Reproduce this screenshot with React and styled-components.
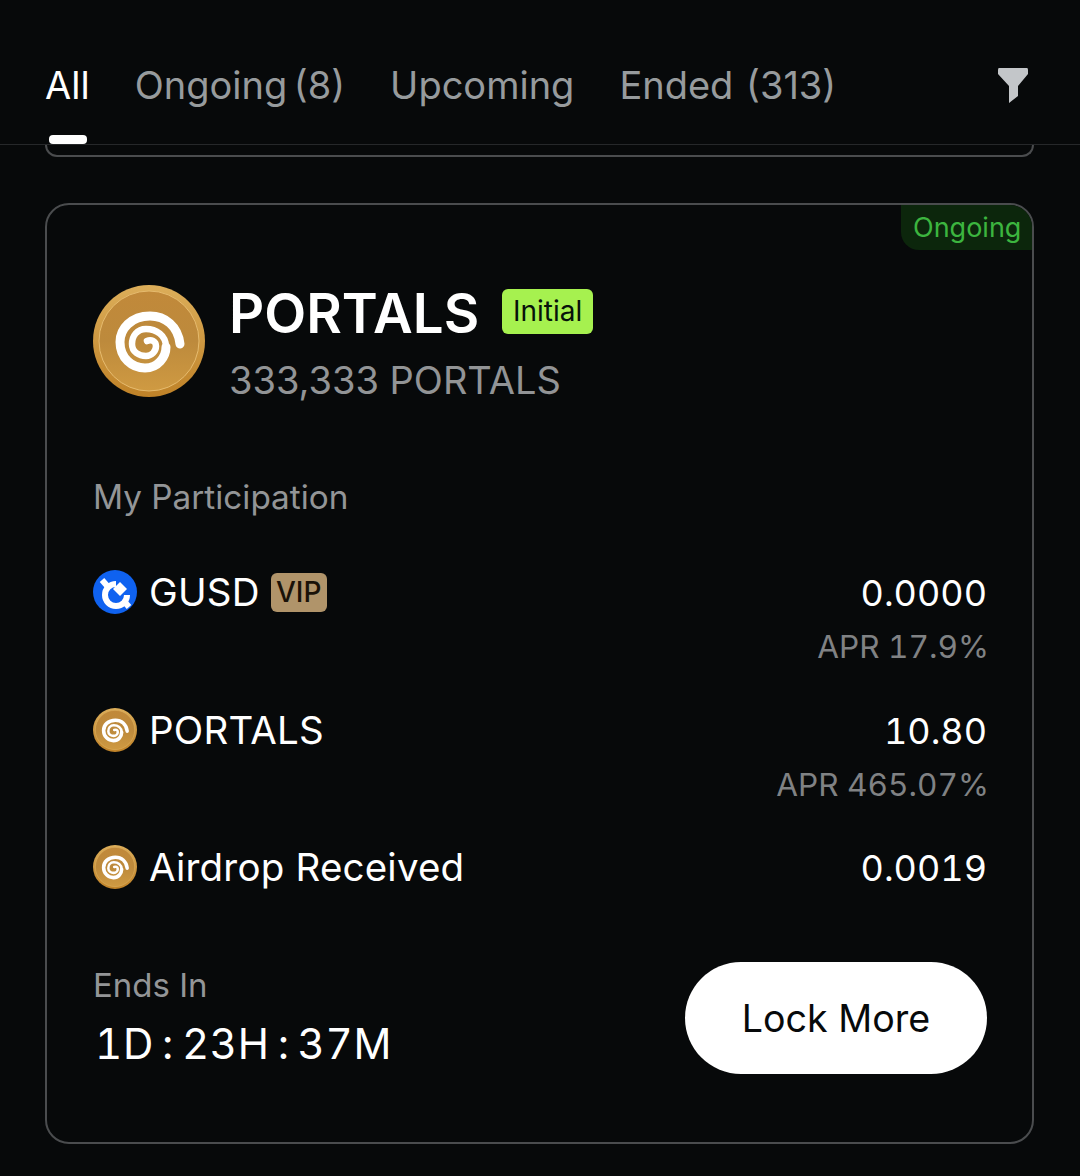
import React from 'react';
import styled, { createGlobalStyle } from 'styled-components';

const Global = createGlobalStyle`
  html, body {
    margin: 0;
    padding: 0;
    background: #07090a;
  }
  * {
    box-sizing: border-box;
  }
`;

const Page = styled.div`
  width: 1080px;
  height: 1176px;
  overflow: hidden;
  background: #07090a;
  color: #fff;
  font-family: Inter, 'Liberation Sans', sans-serif;
`;

const Header = styled.header`
  height: 145px;
  padding: 62px 52px 0 45px;
  display: flex;
  justify-content: space-between;
  align-items: flex-start;
  border-bottom: 1px solid #26282a;
`;

const Tabs = styled.nav`
  display: flex;
  gap: 45px;
`;

const Tab = styled.div`
  position: relative;
  font-size: 38px;
  line-height: 46px;
  word-spacing: ${(p) => p.$ws || 0}px;
  color: ${(p) => (p.$active ? '#fff' : '#979b9d')};

  ${(p) =>
    p.$active &&
    `
    &::after {
      content: '';
      position: absolute;
      left: 4px;
      top: 73px;
      width: 38px;
      height: 9px;
      border-radius: 4px;
      background: #fff;
    }
  `}
`;

const FilterIcon = styled.svg`
  width: 30px;
  height: 35px;
  margin-top: 6px;
`;

const Body = styled.main`
  padding: 0 46px 0 45px;
`;

const PrevCard = styled.div`
  height: 12px;
  border: 2px solid #4a4c4e;
  border-top: 0;
  border-radius: 0 0 24px 24px;
  margin-bottom: 46px;
`;

const Card = styled.section`
  position: relative;
  height: 941px;
  padding: 80px 45px 0 46px;
  border: 2px solid #4a4c4e;
  border-radius: 24px;
`;

const StatusBadge = styled.div`
  position: absolute;
  top: 0;
  right: 0;
  width: 131px;
  height: 45px;
  padding-left: 12px;
  display: flex;
  align-items: center;
  font-size: 27px;
  color: #3cb53f;
  background: #0c260c;
  border-radius: 0 22px 0 18px;
`;

const TokenHead = styled.div`
  display: flex;
  gap: 24px;
`;

const NameLine = styled.div`
  display: flex;
  align-items: center;
  gap: 23px;
  height: 56px;
`;

const TokenName = styled.div`
  font-size: 54.6px;
  font-weight: 600;
  line-height: 56px;
`;

const Tag = styled.span`
  display: inline-flex;
  align-items: center;
  justify-content: center;
  color: ${(p) => p.$color};
  background: ${(p) => p.$bg};
  border-radius: 6px;
  font-size: 28px;
`;

const InitialTag = styled(Tag)`
  width: 91px;
  height: 45px;
  margin-top: -4px;
`;

const VipTag = styled(Tag)`
  width: 56px;
  height: 39px;
  margin-left: -1px;
  font-weight: 500;
  letter-spacing: 0;
`;

const Supply = styled.div`
  margin-top: 17px;
  font-size: 38px;
  line-height: 44px;
  color: #929496;
`;

const SectionLabel = styled.div`
  margin-top: 75px;
  font-size: 33.3px;
  line-height: 40px;
  color: #939597;
`;

const Rows = styled.div`
  margin-top: 53px;
  display: flex;
  flex-direction: column;
`;

const Row = styled.div`
  height: ${(p) => p.$h}px;
  display: flex;
  justify-content: space-between;
`;

const RowLabel = styled.div`
  display: flex;
  align-items: center;
  height: 44px;
  font-size: 38.5px;
  letter-spacing: 0.2px;
  gap: 12px;
`;

const RowValues = styled.div`
  text-align: right;
  font-feature-settings: 'tnum';
`;

const Value = styled.div`
  height: 44px;
  line-height: 46px;
  font-size: 36px;
`;

const Apr = styled.div`
  margin: 12px -2px 0 0;
  font-size: 31.6px;
  line-height: 42px;
  color: #808284;
`;

const Footer = styled.div`
  margin-top: 73px;
  display: flex;
  justify-content: space-between;
`;

const EndsBlock = styled.div`
  padding-top: 3px;
`;

const EndsLabel = styled.div`
  font-size: 33px;
  line-height: 40px;
  color: #939597;
`;

const Countdown = styled.div`
  margin: 15px 0 0 2px;
  font-size: 42px;
  line-height: 48px;
  letter-spacing: 0.7px;
  word-spacing: -4px;
  font-feature-settings: 'tnum';
`;

const LockButton = styled.button`
  width: 302px;
  height: 112px;
  border: 0;
  border-radius: 56px;
  background: #fff;
  color: #07090a;
  font-family: inherit;
  font-size: 37.6px;
`;

function Coin({ size }) {
  return (
    <svg width={size} height={size} viewBox="0 0 112 112" style={{ flex: 'none' }}>
      <defs>
        <linearGradient id="coinFill" x1="0" y1="0" x2="0" y2="1">
          <stop offset="0" stopColor="#c1893a" />
          <stop offset="0.5" stopColor="#bd8a3c" />
          <stop offset="1" stopColor="#cf9a42" />
        </linearGradient>
        <linearGradient id="coinRim" x1="0" y1="0" x2="0" y2="1">
          <stop offset="0" stopColor="#dcae5a" />
          <stop offset="1" stopColor="#bf8228" />
        </linearGradient>
      </defs>
      <circle cx="56" cy="56" r="56" fill="url(#coinRim)" />
      <circle cx="56" cy="56" r="50" fill="url(#coinFill)" stroke="#e6bb6e" strokeWidth="1" />
      <path
        d="M 87 59 C 85 41 72 31 57 31 C 38 31 27 44 27 57 C 27 73 39 83 52 83 C 65 83 73 72 73 62"
        fill="none"
        stroke="#fff"
        strokeWidth="9"
        strokeLinecap="round"
      />
      <path
        d="M 73 62 C 73 50 63 44 53 44 C 44 44 39 51 39 59 C 39 67 46 71 53 71 C 59 71 63 66 63 61 C 63 56 58 54 54 56"
        fill="none"
        stroke="#fff"
        strokeWidth="6.5"
        strokeLinecap="round"
      />
    </svg>
  );
}

function GusdIcon() {
  return (
    <svg width="44" height="44" viewBox="0 0 44 44" style={{ flex: 'none' }}>
      <circle cx="22" cy="22" r="22" fill="#0f62f0" />
      <path d="M 23 14 A 11 11 0 1 0 34 25" fill="none" stroke="#fff" strokeWidth="6" />
      <path d="M 9 10 L 16 18" fill="none" stroke="#fff" strokeWidth="6" />
      <path d="M 30 30 L 36 37" fill="none" stroke="#fff" strokeWidth="6" />
      <path d="M 27 12 L 34 19 L 27 26 L 20 19 Z" fill="#fff" />
    </svg>
  );
}

export default function App() {
  return (
    <Page>
      <Global />
      <Header>
        <Tabs>
          <Tab $active>All</Tab>
          <Tab $ws={-4}>Ongoing (8)</Tab>
          <Tab>Upcoming</Tab>
          <Tab $ws={2}>Ended (313)</Tab>
        </Tabs>
        <FilterIcon viewBox="0 0 30 35">
          <path d="M1 0 H29 Q30 0 30 2 V6 L20 18 V28 L11 35 V18 L0 6 V2 Q0 0 1 0 Z" fill="#c3c6c9" />
        </FilterIcon>
      </Header>
      <Body>
        <PrevCard />
        <Card>
          <StatusBadge>Ongoing</StatusBadge>
          <TokenHead>
            <Coin size={112} />
            <div>
              <NameLine>
                <TokenName>PORTALS</TokenName>
                <InitialTag $bg="#a6f14f" $color="#07120a">Initial</InitialTag>
              </NameLine>
              <Supply>333,333 PORTALS</Supply>
            </div>
          </TokenHead>
          <SectionLabel>My Participation</SectionLabel>
          <Rows>
            <Row $h={138}>
              <RowLabel>
                <GusdIcon />
                GUSD
                <VipTag $bg="#b0946a" $color="#1a1208">VIP</VipTag>
              </RowLabel>
              <RowValues>
                <Value>0.0000</Value>
                <Apr>APR 17.9%</Apr>
              </RowValues>
            </Row>
            <Row $h={137}>
              <RowLabel>
                <Coin size={44} />
                PORTALS
              </RowLabel>
              <RowValues>
                <Value>10.80</Value>
                <Apr>APR 465.07%</Apr>
              </RowValues>
            </Row>
            <Row $h={44}>
              <RowLabel>
                <Coin size={44} />
                Airdrop Received
              </RowLabel>
              <RowValues>
                <Value>0.0019</Value>
              </RowValues>
            </Row>
          </Rows>
          <Footer>
            <EndsBlock>
              <EndsLabel>Ends In</EndsLabel>
              <Countdown>1D : 23H : 37M</Countdown>
            </EndsBlock>
            <LockButton>Lock More</LockButton>
          </Footer>
        </Card>
      </Body>
    </Page>
  );
}
